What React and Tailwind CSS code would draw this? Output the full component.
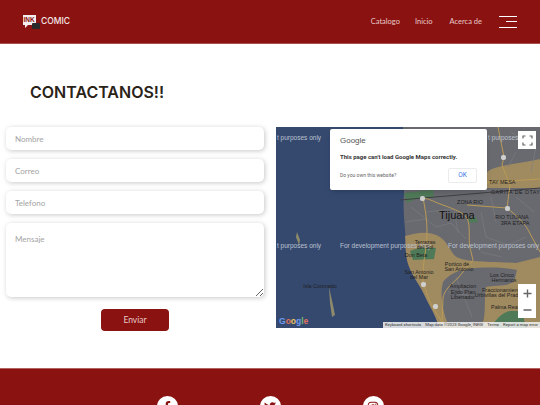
import { FaFacebookF, FaTwitter, FaInstagram } from "react-icons/fa";

const placeCls = "fill-[#1f1f1f] text-[5.4px] font-['Liberation_Sans',sans-serif]";
const devCls = "fill-[#bcc2cf] text-[6.5px] font-['Liberation_Sans',sans-serif]";
const roadCls = "fill-none stroke-[#b99a56] stroke-[1px]";
const minorCls = "fill-none stroke-[#7d7e84] stroke-[0.6px]";

// text labels on the map: [x, y, text]
const places = [
  [149, 117, "Terrazas"],
  [149, 122, "del Sol"],
  [140, 130, "Don Beta"],
  [181, 139, "Portico de"],
  [183, 144, "San Antonio"],
  [143, 147, "San Antonio"],
  [143, 152, "del Mar"],
  [226, 150, "Los Cinco"],
  [228, 155, "Hermanos"],
  [187, 161, "Ampliacion"],
  [187, 167, "Ejido Plan"],
  [187, 172, "Libertador"],
  [226, 165, "Fraccionamiento"],
  [222, 170, "Urbivillas del Prado"],
  [229, 182, "Palma Real"],
  [44, 161, "Isla Coronado"],
  [194, 77, "ZONA RIO"],
  [236, 92, "RIO TIJUANA"],
  [239, 98, "3RA ETAPA"],
];

function GoogleLogo() {
  return (
    <span className="absolute left-[3px] bottom-[1px] text-[8.5px] leading-[11px] font-bold font-['Liberation_Sans',sans-serif]">
      <span className="text-[#6f9bf0]">G</span>
      <span className="text-[#e0705f]">o</span>
      <span className="text-[#e8c35a]">o</span>
      <span className="text-[#6f9bf0]">g</span>
      <span className="text-[#6fb67a]">l</span>
      <span className="text-[#e0705f]">e</span>
    </span>
  );
}

function MapDrawing() {
  return (
    <svg viewBox="0 0 264 201" className="absolute inset-0 w-full h-full">
      <rect width="264" height="201" fill="#35496f" />
      {/* land */}
      <path d="M127 0 H264 V201 H164 C160 192 158 186 155 181 C150 172 148 166 143 158 C138 150 133 142 131 133 C129 122 130 112 129 103 C128 90 127 80 128 66 Z" fill="#696a70" />
      {/* tan south of the city */}
      <path d="M129 109 C140 106 150 104 160 108 C170 112 172 120 178 128 C186 136 210 134 240 136 L264 130 V201 H164 C160 192 158 186 155 181 C150 172 148 166 143 158 C138 150 133 142 131 133 C129 122 130 116 129 109 Z" fill="#a08a60" />
      <path d="M199 61 C203 52 208 46 216 42 C226 38 245 36 264 32 V61 Z" fill="#a08a60" />
      <path d="M167 155 C172 148 182 143 192 142 C205 140 228 140 241 143 L238 155 C228 160 218 158 210 160 C208 172 210 186 207 195 C196 199 182 199 172 197 C168 188 163 170 167 155 Z" fill="#696a70" />
      <path d="M128 66 L157 63 L158 70 L140 72 L131 76 Z" fill="#4f7a58" />
      <path d="M134 124 C142 120 152 120 160 121 L158 132 L137 133 Z" fill="#4f7a58" />
      <path d="M217 197 C222 190 228 185 234 184 L246 184 L250 201 H220 Z" fill="#4f7a58" />
      <path d="M192 92 L200 90 L202 95 L194 96 Z" fill="#4f7a58" />
      {/* islands */}
      <path d="M21 105 L24 113 L23 118 L20 110 Z" fill="#8e8a6c" />
      <path d="M53 160 L57 178 L59 188 L56 190 L54 176 Z" fill="#8e8a6c" />
      {/* side streets */}
      <path d="M135 80 L160 100 L175 96 L190 112 M150 85 L178 82 L182 106 M205 85 L210 110 L232 118 L250 110 M215 70 L220 95 M240 70 L258 85 M130 95 L150 92 M205 125 L226 130 M235 5 L260 20 L255 45 M240 25 L232 40 M172 165 L200 170 M180 150 L196 190" className={minorCls} />
      {/* roads */}
      <path d="M124 73 L264 61" className="fill-none stroke-[#3f3f42] stroke-[1px]" />
      <path d="M140 60 L264 52" className={roadCls} />
      <path d="M147 71 C155 72 160 76 167 78 C178 82 188 86 191 91 C195 100 192 112 194 121 L197 133" className={roadCls} />
      <path d="M191 78 L231 81 C240 88 246 94 251 101 L264 125" className={roadCls} />
      <path d="M231 81 L234 58 L226 38 L228 30 L222 0" className={roadCls} />
      <path d="M197 133 L182 151 C174 158 168 164 167 171 L166 195" className={roadCls} />
      <path d="M147 71 C151 90 152 105 150 120 C148 135 146 145 147 155 C150 165 154 175 157 181 L166 195" className={roadCls} />
      {/* highway shields */}
      <rect x="144" y="69" width="5" height="5" rx="2" fill="#cfcfcf" />
      <rect x="225" y="28" width="5" height="5" rx="2" fill="#cfcfcf" />
      <rect x="229" y="79" width="5" height="5" rx="2" fill="#cfcfcf" />
      <rect x="145" y="155" width="5" height="5" rx="2" fill="#cfcfcf" />
      <rect x="157" y="177" width="5" height="5" rx="2" fill="#cfcfcf" />
      <text x="1" y="13" className={devCls}>t purposes only</text>
      <text x="1" y="121" className={devCls}>t purposes only</text>
      <text x="64" y="121" className={devCls}>For development purposes only</text>
      <text x="172" y="121" className={devCls}>For development purposes only</text>
      <text x="212" y="13" className={devCls}>t purposes</text>
      <text x="163" y="92" className="fill-[#111] text-[11px] font-['Liberation_Sans',sans-serif]">Tijuana</text>
      <text x="215" y="67" className="fill-[#1f1f1f] text-[5.4px] tracking-[0.4px] font-['Liberation_Sans',sans-serif]">GARITA DE OTAY</text>
      <text x="213" y="57" className={placeCls}>TAY MESA</text>
      {places.map(([x, y, t]) => (
        <text key={t + y} x={x} y={y} textAnchor="middle" className={placeCls}>{t}</text>
      ))}
    </svg>
  );
}

function MapBox() {
  return (
    <div className="relative w-[264px] h-[201px] overflow-hidden">
      <MapDrawing />
      <div className="absolute left-[54px] top-[2px] w-[157px] h-[61px] bg-white rounded-[2px] shadow-md font-['Roboto',sans-serif] px-[10px] pt-[6px]">
        <div className="text-[8px] leading-[12px] text-[#555] font-['Liberation_Sans',sans-serif]">Google</div>
        <div className="mt-[5px] text-[6px] leading-[10px] font-bold text-[#333]">This page can't load Google Maps correctly.</div>
        <div className="mt-[6px] flex items-center justify-between">
          <span className="text-[5px] text-[#666]">Do you own this website?</span>
          <span className="w-[29px] h-[15px] border border-[#ebebeb] rounded-[2px] flex items-center justify-center text-[6.5px] text-[#3b78e7]">OK</span>
        </div>
      </div>
      <div className="absolute right-[4px] top-[4px] w-[18px] h-[18px] bg-white flex items-center justify-center">
        <svg viewBox="0 0 11 11" className="w-[11px] h-[11px]" fill="none" stroke="#666" strokeWidth="1.2">
          <path d="M1 3.5 V1 H3.5 M7.5 1 H10 V3.5 M10 7.5 V10 H7.5 M3.5 10 H1 V7.5" />
        </svg>
      </div>
      <div className="absolute right-[4px] bottom-[10px] w-[18px] h-[34px] bg-white flex items-center justify-center">
        <svg viewBox="0 0 11 28" className="w-[11px] h-[28px]" fill="none" stroke="#666" strokeWidth="1.4">
          <path d="M1.5 6.5 H9.5 M5.5 2.5 V10.5 M1.5 23 H9.5" />
        </svg>
      </div>
      <GoogleLogo />
      <div className="absolute right-0 bottom-0 h-[6px] flex items-center bg-[#f1f1f1]/85 text-[4.2px] leading-[6px] text-[#333] font-['Roboto',sans-serif] whitespace-nowrap">
        <span className="px-[2px]">Keyboard shortcuts</span>
        <span className="px-[2px]">Map data ©2023 Google, INEGI</span>
        <span className="px-[2px]">Terms</span>
        <span className="px-[2px]">Report a map error</span>
      </div>
    </div>
  );
}

function Field({ placeholder }) {
  return (
    <input
      placeholder={placeholder}
      className="w-full h-[23px] bg-white rounded-[5px] px-[9px] text-[8px] text-[#444] placeholder:text-[#a3a3a3] outline-none shadow-[1px_1px_5px_rgba(0,0,0,0.22)]"
    />
  );
}

export default function App() {
  return (
    <div className="h-[405px] overflow-hidden bg-white font-['Lato',sans-serif]">
      <header className="h-[44px] bg-[#8a1210] border-b border-[#a8504e] flex items-center pl-[22px] pr-[23px]">
        <div className="flex items-center">
          <svg viewBox="0 0 18 16" className="w-[18px] h-[16px]">
            <path d="M1 1 H14 V11 H6 L3 14 V11 H1 Z" fill="#f4eeee" />
            <rect x="10" y="9" width="8" height="6" rx="1" fill="#2a2a2a" />
            <text x="1.5" y="8" className="fill-[#8a1210] text-[6.5px] font-bold font-['Liberation_Sans',sans-serif]">INK</text>
          </svg>
          <span className="ml-[1px] text-[8.5px] font-medium text-[#f5e9e9] font-['Inter',sans-serif]">COMIC</span>
        </div>
        <nav className="ml-auto flex items-center text-[7.5px] text-[#e8c9c8]">
          <span>Catalogo</span>
          <span className="ml-[15px]">Inicio</span>
          <span className="ml-[17px]">Acerca de</span>
          <div className="ml-[17px] w-[18px] flex flex-col items-end gap-[4.5px]">
            <span className="block h-px w-full bg-white" />
            <span className="block h-px w-[11px] bg-white" />
            <span className="block h-px w-full bg-white" />
          </div>
        </nav>
      </header>
      <main className="h-[324px]">
        <h1 className="pt-[38px] pl-[30px] text-[16px] leading-[20px] font-semibold text-[#2a2318] font-['Inter',sans-serif]">CONTACTANOS!!</h1>
        <div className="mt-[25px] flex pl-[6px]">
          <form className="w-[258px] flex flex-col">
            <div className="flex flex-col gap-[9px]">
              <Field placeholder="Nombre" />
              <Field placeholder="Correo" />
              <Field placeholder="Telefono" />
              <textarea
                placeholder="Mensaje"
                className="w-full h-[74px] bg-white rounded-[5px] px-[9px] py-[10px] text-[8px] placeholder:text-[#a3a3a3] outline-none shadow-[1px_1px_5px_rgba(0,0,0,0.22)]"
              />
            </div>
            <button type="button" className="mt-[12px] mx-auto w-[68px] h-[22px] rounded-[4px] bg-[#8a1210] text-[8.5px] text-[#e8c9c8]">Enviar</button>
          </form>
          <div className="ml-[12px]">
            <MapBox />
          </div>
        </div>
      </main>
      <footer className="h-[60px] bg-[#8a1210] border-t border-[#b5615f] flex justify-center gap-[82px] pt-[27px]">
        <div className="w-[21px] h-[21px] rounded-full bg-white flex items-center justify-center text-[#8a1210] text-[12px]"><FaFacebookF /></div>
        <div className="w-[21px] h-[21px] rounded-full bg-white flex items-center justify-center text-[#8a1210] text-[12px]"><FaTwitter /></div>
        <div className="w-[21px] h-[21px] rounded-full bg-white flex items-center justify-center text-[#8a1210] text-[12px]"><FaInstagram /></div>
      </footer>
    </div>
  );
}
